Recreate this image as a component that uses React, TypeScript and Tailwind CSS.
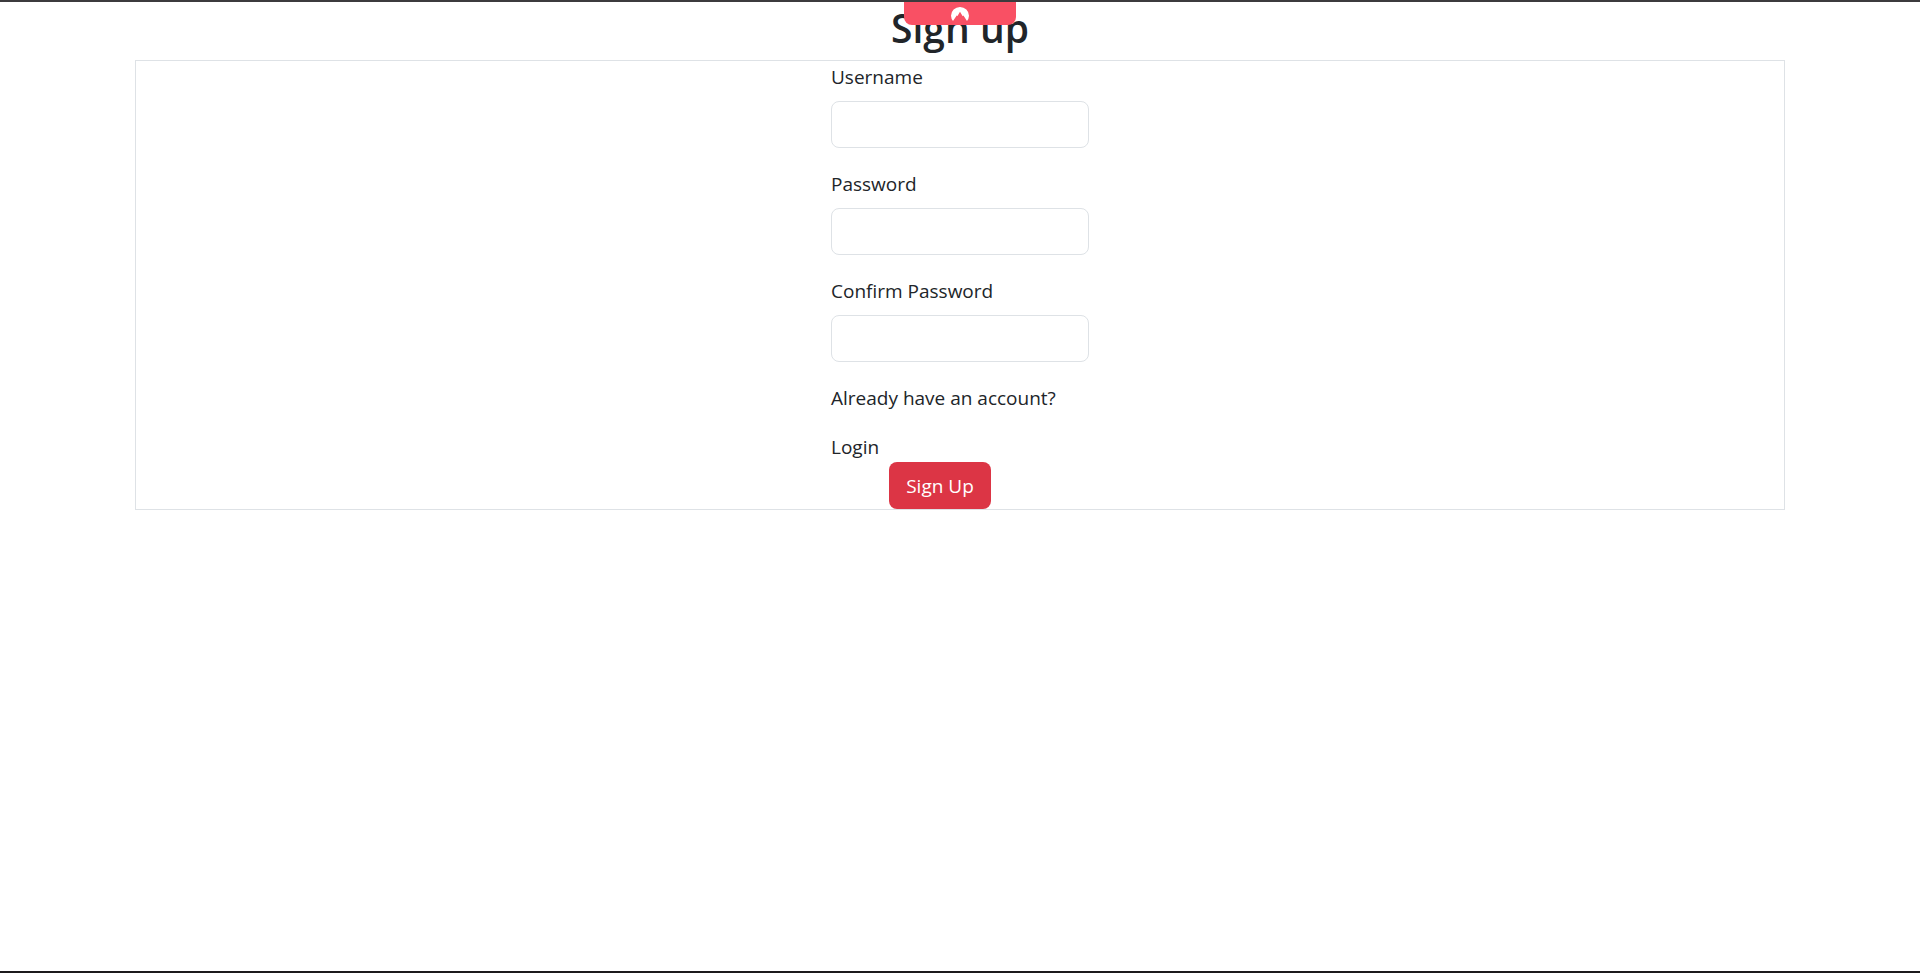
import React from "react";

function Field({ id, label, type }: { id: string; label: string; type: string }) {
  return (
    <div className="mb-5">
      <label htmlFor={id} className="mb-2 block">
        {label}
      </label>
      <input
        id={id}
        type={type}
        className="block h-[47px] w-full rounded-lg border border-[#dee2e6] bg-white px-4 outline-none focus:border-[#86b7fe]"
      />
    </div>
  );
}

export default function App() {
  return (
    <div className="relative flex min-h-screen flex-col border-t-2 border-b-2 border-t-[#3c3b3d] border-b-[#1c1a1c] bg-white font-['Open_Sans','Noto_Sans',sans-serif] text-[19px] leading-8 text-[#212529]">
      <button
        type="button"
        aria-label="Show panel"
        className="absolute top-0 left-1/2 flex h-[23px] w-28 -translate-x-1/2 justify-center rounded-b-lg bg-[#f95064] pt-[5px]"
      >
        <svg width="18" height="14" viewBox="0 0 18 14" fill="#fff" aria-hidden="true">
          <path d="M2 14A9 9 0 0 1 0 8.8A9 8.8 0 0 1 18 8.8A9 9 0 0 1 16 14L12.4 8.6L11.7 9.3L9 4.8L6.5 9L5.7 8.4Z" />
        </svg>
      </button>
      <main className="mx-auto w-full max-w-[1650px]">
        <h1 className="pb-1.5 text-center text-[39px] leading-[52px] font-semibold">Sign up</h1>
        <form
          className="flex justify-center border border-[#dee2e6]"
          onSubmit={(e) => e.preventDefault()}
        >
          <div className="w-[258px]">
            <Field id="username" label="Username" type="text" />
            <Field id="password" label="Password" type="password" />
            <Field id="confirm" label="Confirm Password" type="password" />
            <p className="whitespace-nowrap">Already have an account?</p>
            <a href="#login" className="mt-[18px] block w-fit leading-[30px]">
              Login
            </a>
            <button
              type="submit"
              className="ml-[58px] block h-[47px] w-[102px] rounded-lg bg-[#dc3545] text-white"
            >
              Sign Up
            </button>
          </div>
        </form>
      </main>
    </div>
  );
}
